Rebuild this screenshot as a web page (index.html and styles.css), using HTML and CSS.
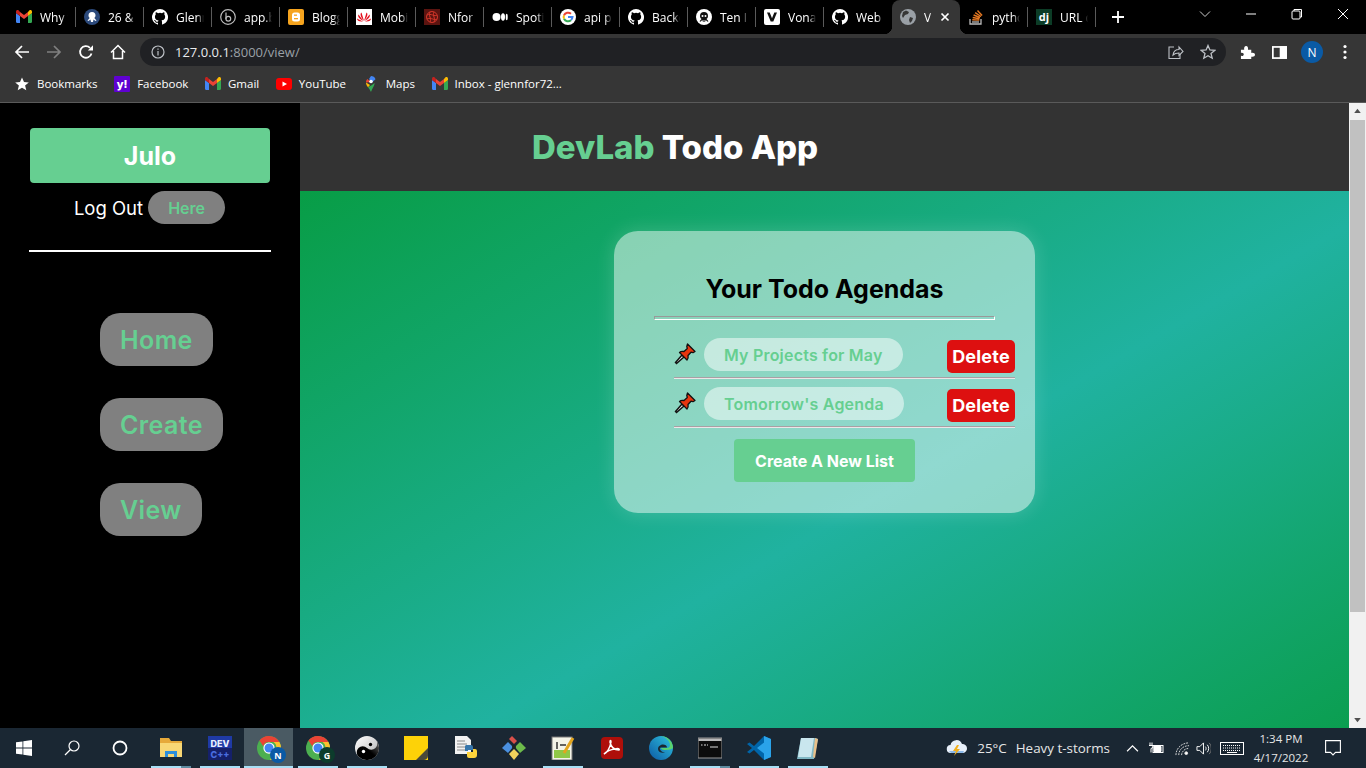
FILE: index.html
```html
<!DOCTYPE html>
<html lang="en">
  <head>
    <meta charset="UTF-8" />
    <meta name="viewport" content="width=device-width, initial-scale=1.0" />
    <title>DevLab Todo App</title>
    <link rel="stylesheet" href="styles.css">
  </head>
  <body>
    <svg class="defs" width="0" height="0">
      <defs>
        <symbol id="gh" viewBox="0 0 16 16"><path fill="#fff" d="M8 0a8 8 0 0 0-2.530 15.590c.4.070.550-.170.550-.380v-1.490c-2.010.370-2.530-.490-2.690-.940-.090-.230-.480-.940-.820-1.130-.280-.150-.680-.520-.010-.530.630-.010 1.080.580 1.230.820.720 1.210 1.870.870 2.330.660.070-.520.280-.870.510-1.070-1.780-.200-3.640-.890-3.640-3.950 0-.870.310-1.590.820-2.150-.080-.200-.360-1.020.080-2.120 0 0 .670-.210 2.200.820a7.400 7.400 0 0 1 4 0c1.530-1.040 2.200-.820 2.200-.820.440 1.100.160 1.920.080 2.120.510.560.820 1.270.820 2.150 0 3.070-1.870 3.750-3.650 3.950.290.250.540.730.540 1.480v2.200c0 .210.150.460.550.380A8 8 0 0 0 8 0z"/></symbol>
        <symbol id="gmail" viewBox="0 0 16 16"><path fill="#4285f4" d="M1 14h3V7L0 4v8.800C0 13.500.5 14 1 14z"/><path fill="#34a853" d="M12 14h3c.6 0 1-.5 1-1.200V4l-4 3z"/><path fill="#fbbc04" d="M12 3v4l4-3V2.500c0-1.300-1.500-2-2.500-1.200z"/><path fill="#ea4335" d="M4 7V3l4 3 4-3v4L8 10z"/><path fill="#c5221f" d="M0 2.500V4l4 3V3L2.500 1.300C1.500.5 0 1.200 0 2.500z"/></symbol>
        <symbol id="octo" viewBox="0 0 16 16"><circle cx="8" cy="8" r="8" fill="#fff"/><path fill="#111" d="M8 3a4 4 0 0 0-4 4c0 1.600.8 2.500 1.500 3L3.500 12.300l1 .5L6.300 11l.7 2h.6V11h.8v2h.6l.7-2 1.800 1.800 1-.5L10.500 10c.7-.5 1.500-1.400 1.500-3a4 4 0 0 0-4-4z"/><circle cx="6.500" cy="7" r="1" fill="#fff"/><circle cx="9.500" cy="7" r="1" fill="#fff"/></symbol>
        <symbol id="chrome" viewBox="0 0 32 32"><circle cx="16" cy="16" r="16" fill="#4caf50"/><path fill="#ea4335" d="M16 0a16 16 0 0 1 13.900 8H16a8 8 0 0 0-7.700 5.700L3.300 5.900A16 16 0 0 1 16 0z"/><path fill="#fbc02d" d="M29.900 8a16 16 0 0 1-12.700 23.900L23 21a8 8 0 0 0-1-13z"/><circle cx="16" cy="16" r="7.500" fill="#fff"/><circle cx="16" cy="16" r="6" fill="#4285f4"/></symbol>
        <symbol id="pin" viewBox="0 0 22 22">
          <path fill="#dfe3e6" stroke="#111" stroke-width="1.400" d="M8 12 1.500 19.500l1 1L10 14z"/>
          <path fill="#e8350f" stroke="#111" stroke-width="1.300" stroke-linejoin="round" d="M13.500 1 21 8.500l-2 1.200-2-.5-3 3.300c.5 2 0 3.500-1 4.500L5.500 9.500c1-1 2.500-1.500 4.500-1l3.300-3-.5-2z"/>
        </symbol>
      </defs>
    </svg>

    <div class="tabstrip">
      <div class="tab first"><svg class="fav"><use href="#gmail"/></svg><span class="tab-title">Why we</span></div>
      <div class="tab"><svg class="fav" viewBox="0 0 16 16"><circle cx="8" cy="8" r="8" fill="#2c4a7c"/><path fill="#fff" d="M8 3a3.500 3.500 0 0 0-3.500 3.500c0 1.300.6 2 1.200 2.500L3.500 11.500l1 .4L6.500 10.500 7 13h2l.5-2.500 2 1.400 1-.4L10.300 9c.6-.5 1.200-1.200 1.200-2.500A3.500 3.500 0 0 0 8 3z"/></svg><span class="tab-title">26 &amp; more</span></div>
      <div class="tab"><svg class="fav"><use href="#gh"/></svg><span class="tab-title">Glennfor</span></div>
      <div class="tab"><svg class="fav" viewBox="0 0 16 16" fill="none" stroke="#bdbdbd" stroke-width="1.200"><circle cx="8" cy="8" r="7.300"/><path d="M6 3.500v6.500"/><circle cx="8.300" cy="9.800" r="2.400"/></svg><span class="tab-title">app.bit</span></div>
      <div class="tab"><svg class="fav" viewBox="0 0 16 16"><rect width="16" height="16" rx="2" fill="#f6a41e"/><rect x="4" y="3.500" width="8" height="9" rx="2.500" fill="#fff"/><rect x="6" y="5.500" width="3" height="1.300" fill="#f6a41e"/><rect x="6" y="9" width="4" height="1.300" fill="#f6a41e"/></svg><span class="tab-title">Blogger</span></div>
      <div class="tab"><svg class="fav" viewBox="0 0 16 16"><rect width="16" height="16" fill="#fff"/><path fill="#e3101e" d="M8 12 5.500 3.500C4 4.500 4 7 8 12zm0 0 2.500-8.500C12 4.500 12 7 8 12zM7.500 12 2.500 5.500C1.500 7 2.500 9.500 7.500 12zm1 0 5-6.500c1 1.500 0 4-5 6.500zM7 12.500 1 9.500c0 2 2 3.500 6 3zm2 0 6-3c0 2-2 3.500-6 3z"/></svg><span class="tab-title">Mobile</span></div>
      <div class="tab"><svg class="fav" viewBox="0 0 16 16" fill="none" stroke="#d4362a"><rect width="16" height="16" fill="#5c1410" stroke="none"/><circle cx="8" cy="8" r="5.500"/><path d="M3 6c4-2 8 2 10 0M3 10c4-2 8 2 10 0M6 3c-2 4 2 6 0 10M10 3c-2 4 2 6 0 10"/></svg><span class="tab-title">Nfor</span></div>
      <div class="tab"><svg class="fav" viewBox="0 0 16 16" fill="#fff"><circle cx="4.500" cy="8" r="4"/><ellipse cx="11" cy="8" rx="2" ry="3.700"/><ellipse cx="14.700" cy="8" rx="1" ry="3.300"/></svg><span class="tab-title">Spotify</span></div>
      <div class="tab"><svg class="fav" viewBox="0 0 16 16"><circle cx="8" cy="8" r="8" fill="#fff"/><path fill="none" stroke="#4285f4" stroke-width="2" d="M8 8h4.500a4.600 4.600 0 0 1-1.500 3"/><path fill="none" stroke="#34a853" stroke-width="2" d="M11 11.300a4.600 4.600 0 0 1-7-1.600"/><path fill="none" stroke="#fbbc04" stroke-width="2" d="M4 9.700a4.600 4.600 0 0 1 0-3.400"/><path fill="none" stroke="#ea4335" stroke-width="2" d="M4 6.300a4.600 4.600 0 0 1 7-1.600"/></svg><span class="tab-title">api pr</span></div>
      <div class="tab"><svg class="fav"><use href="#gh"/></svg><span class="tab-title">Backend</span></div>
      <div class="tab"><svg class="fav"><use href="#octo"/></svg><span class="tab-title">Ten Ir</span></div>
      <div class="tab"><svg class="fav" viewBox="0 0 16 16"><rect width="16" height="16" rx="2" fill="#fff"/><path fill="#111" d="M3 3.500h2.700L8 9.200l2.300-5.700H13L9.300 12.500H6.700z"/></svg><span class="tab-title">Vonage</span></div>
      <div class="tab no-sep"><svg class="fav"><use href="#gh"/></svg><span class="tab-title">Web</span></div>
      <div class="tab active"><svg class="fav" viewBox="0 0 16 16"><circle cx="8" cy="8" r="8" fill="#9aa0a6"/><path fill="#363636" d="M6 1.500 9 3 8 5 5 6l-2 3-1-2 1-4zM10 8l3 1-1 3-2 2-1-3z"/></svg><span class="tab-title">View</span><svg class="tab-close" viewBox="0 0 10 10" stroke="#fff" stroke-width="1.700"><path d="M1.500 1.500l7 7M8.500 1.500l-7 7"/></svg></div>
      <div class="tab"><svg class="fav" viewBox="0 0 16 16" fill="none"><path stroke="#bcbbbb" stroke-width="1.300" d="M2 10v5h11v-5"/><path stroke="#bcbbbb" stroke-width="1.300" d="M4 13h7"/><path stroke="#e87922" stroke-width="1.400" d="M4.300 10.800l7 .3M4.700 8.500l6.800 1.200M5.600 6l6.400 2.500M7.200 3.700l5.800 3.800M9.500 1.500l4.600 5"/></svg><span class="tab-title">python</span></div>
      <div class="tab"><svg class="fav" viewBox="0 0 16 16"><rect width="16" height="16" fill="#0c3c26"/><text class="dj" x="8" y="12" text-anchor="middle">dj</text></svg><span class="tab-title">URL dispatcher</span></div>
      <svg class="new-tab" viewBox="0 0 12 12" stroke="#fff" stroke-width="1.800"><path d="M6 0v12M0 6h12"/></svg>
      <div class="window-controls">
        <svg class="win-icon" viewBox="0 0 12 12" fill="none" stroke="#ccc"><path d="M1 3.500 6 8.500l5-5"/></svg>
        <svg class="win-icon" viewBox="0 0 12 12" stroke="#fff"><path d="M1 6h10"/></svg>
        <svg class="win-icon" viewBox="0 0 12 12" fill="none" stroke="#fff"><rect x="1" y="3" width="8" height="8" rx="1"/><path d="M3 3V1.500h7.500V9H9"/></svg>
        <svg class="win-icon" viewBox="0 0 12 12" stroke="#fff"><path d="M1 1l10 10M11 1 1 11"/></svg>
      </div>
    </div>

    <div class="toolbar">
      <svg class="tool" viewBox="0 0 16 16" fill="none" stroke="#fff" stroke-width="1.700"><path d="M15 8H2M8 2 2 8l6 6"/></svg>
      <svg class="tool" viewBox="0 0 16 16" fill="none" stroke="#808080" stroke-width="1.700"><path d="M1 8h13M8 2l6 6-6 6"/></svg>
      <svg class="tool" viewBox="0 0 16 16" fill="none" stroke="#fff" stroke-width="1.800"><path d="M13.500 9.500A5.800 5.800 0 1 1 12 3.800"/><path fill="#fff" stroke="none" d="M9.800 6.500H15V1.300z"/></svg>
      <svg class="tool" viewBox="0 0 16 16" fill="none" stroke="#fff" stroke-width="1.500"><path d="M1 8.500 8 1.500l7 7M3.500 7v7.500h9V7"/></svg>
      <div class="omnibox">
        <svg class="info" viewBox="0 0 14 14" fill="none" stroke="#bdc1c6" stroke-width="1.200"><circle cx="7" cy="7" r="6"/><path d="M7 6v4.500M7 3.500v1.200"/></svg>
        <span class="url">127.0.0.1<span class="url-dim">:8000/view/</span></span>
        <span class="spacer"></span>
        <svg class="omni-icon" viewBox="0 0 16 16" fill="none" stroke="#bdc1c6" stroke-width="1.100"><path d="M6 3H1v11.500h11V10"/><path d="M5 11c.5-3.500 3-5.500 6-5.500V3l4 4.500-4 4V9c-2.500 0-4.500.5-6 2z"/></svg>
        <svg class="omni-icon" viewBox="0 0 16 16" fill="none" stroke="#bdc1c6" stroke-width="1.300"><path d="M8 1.500 9.900 6l4.800.4-3.700 3.100 1.200 4.700L8 11.700l-4.200 2.500L5 9.500 1.300 6.400 6.100 6z"/></svg>
      </div>
      <svg class="ext-icon" viewBox="0 0 16 16" fill="#fff"><path d="M1 5h3.500C4 2.500 5 1 6.500 1S9 2.500 8.500 5H12v3.500c2.500-.5 4 .5 4 2s-1.500 2.500-4 2V15H1v-3.500c2 .5 3-.5 3-1.500S3 8 1 8.500z"/></svg>
      <svg class="ext-icon" viewBox="0 0 14 12" fill="none" stroke="#fff" stroke-width="1.600"><rect x=".8" y=".8" width="12.400" height="10.400"/><path fill="#fff" d="M8 1h5v10H8z"/></svg>
      <span class="avatar">N</span>
      <svg class="menu-dots" viewBox="0 0 4 16" fill="#fff"><circle cx="2" cy="2.500" r="1.600"/><circle cx="2" cy="8" r="1.600"/><circle cx="2" cy="13.500" r="1.600"/></svg>
    </div>

    <div class="bookmarks">
      <div class="bm"><svg class="fav" viewBox="0 0 16 16" fill="#fff"><path d="M8 1.500 10 6l4.800.4-3.700 3.100 1.200 4.700L8 11.700l-4.300 2.500 1.200-4.700L1.200 6.400 6 6z"/></svg>Bookmarks</div>
      <div class="bm"><svg class="fav" viewBox="0 0 16 16"><rect width="16" height="16" rx="1" fill="#5f01d1"/><text class="yahoo" x="8" y="12" text-anchor="middle">y!</text></svg>Facebook</div>
      <div class="bm"><svg class="fav"><use href="#gmail"/></svg>Gmail</div>
      <div class="bm"><svg class="fav" viewBox="0 0 16 16"><rect y="2" width="16" height="12" rx="3" fill="#f00"/><path fill="#fff" d="M6.500 5.500 11 8l-4.500 2.500z"/></svg>YouTube</div>
      <div class="bm"><svg class="fav" viewBox="0 0 16 16"><path fill="#34a853" d="M8 16c-1-2-2-3.500-3-4.700L9 9l2.500-2c.3 2-1.500 4-3.500 9z"/><path fill="#fbbc04" d="M5 11.300C4 10 3 8.700 3 6.500L7 9z"/><path fill="#4285f4" d="M8 0c2 0 3.800 1.200 4.500 3.200L9 6.500 6 3z"/><path fill="#ea4335" d="M3 6.500C3 5 3.500 4 4.300 3L8 6z"/><circle cx="8" cy="5.500" r="1.800" fill="#fff"/></svg>Maps</div>
      <div class="bm"><svg class="fav"><use href="#gmail"/></svg>Inbox - glennfor72...</div>
    </div>

    <div class="viewport">
      <aside class="sidebar">
        <div class="user-btn">Julo</div>
        <div class="logout">Log Out <span class="here">Here</span></div>
        <hr class="side-rule" />
        <nav class="side-nav">
          <a class="nav-pill">Home</a>
          <a class="nav-pill">Create</a>
          <a class="nav-pill">View</a>
        </nav>
      </aside>

      <main class="content">
        <header class="app-header">
          <h1><span class="accent">DevLab</span> Todo App</h1>
        </header>
        <section class="stage">
          <div class="card">
            <h2>Your Todo Agendas</h2>
            <hr class="card-rule" />
            <div class="todo-row">
              <svg class="pin"><use href="#pin"/></svg>
              <span class="todo-name">My Projects for May</span>
              <button class="delete-btn">Delete</button>
            </div>
            <div class="todo-row">
              <svg class="pin"><use href="#pin"/></svg>
              <span class="todo-name">Tomorrow's Agenda</span>
              <button class="delete-btn">Delete</button>
            </div>
            <button class="create-btn">Create A New List</button>
          </div>
        </section>
      </main>

      <div class="scrollbar">
        <svg class="arrow" viewBox="0 0 17 17" fill="#505050"><path d="M8.500 6 12 10.500H5z"/></svg>
        <div class="thumb"></div>
        <svg class="arrow" viewBox="0 0 17 17" fill="#505050"><path d="M8.500 11 5 6.500h7z"/></svg>
      </div>
    </div>

    <footer class="taskbar">
      <div class="task start"><svg class="task-icon" viewBox="0 0 16 16" fill="#fff"><path d="M0 2.300 6.500 1.400v6.200H0zM7.300 1.300 16 0v7.600H7.300zM0 8.400h6.500v6.200L0 13.700zM7.300 8.400H16V16l-8.700-1.300z"/></svg></div>
      <div class="task start"><svg class="task-icon" viewBox="0 0 16 16" fill="none" stroke="#fff" stroke-width="1.200"><circle cx="10" cy="6" r="5"/><path d="M6.500 9.500 1 15"/></svg></div>
      <div class="task start"><svg class="task-icon" viewBox="0 0 16 16" fill="none" stroke="#fff" stroke-width="1.800"><circle cx="8" cy="8" r="6.500"/></svg></div>

      <div class="task on split"><svg class="app-icon" viewBox="0 0 24 24"><path fill="#e6a93a" d="M1 2h9l2 3h11v3H1z"/><path fill="#f8d775" d="M1 7h22v14H1z"/><path fill="#2d8fdc" d="M6 21v-6h12v6h-3v-3H9v3z"/></svg></div>
      <div class="task on"><svg class="app-icon" viewBox="0 0 24 24"><rect width="24" height="24" fill="#1f3aa5"/><rect y="12" width="24" height="12" fill="#15206a"/><text class="dev" x="12" y="11" text-anchor="middle">DEV</text><text class="dev dim" x="12" y="22" text-anchor="middle">C++</text></svg></div>
      <div class="task on active-app"><svg class="app-icon" viewBox="0 0 32 32"><use href="#chrome"/></svg><span class="badge blue">N</span></div>
      <div class="task on"><svg class="app-icon" viewBox="0 0 32 32"><use href="#chrome"/></svg><span class="badge dark">G</span></div>
      <div class="task on"><svg class="app-icon" viewBox="0 0 24 24"><defs><linearGradient id="yy" x1="0" y1="0" x2="1" y2="1"><stop offset="0" stop-color="#fff"/><stop offset=".6" stop-color="#d0d0d0"/><stop offset="1" stop-color="#7a7a7a"/></linearGradient><linearGradient id="yk" x1="0" y1="1" x2="1" y2="0"><stop offset=".5" stop-color="#000"/><stop offset="1" stop-color="#777"/></linearGradient></defs><circle cx="12" cy="12" r="12" fill="url(#yy)"/><path fill="url(#yk)" d="M20.500 3.500A12 12 0 0 1 3.500 20.500 6 6 0 0 1 12 12a6 6 0 0 0 8.500-8.500z"/><circle cx="15.500" cy="8.500" r="1.700" fill="#000"/><circle cx="8.500" cy="15.500" r="1.700" fill="#fff"/></svg></div>
      <div class="task"><svg class="app-icon" viewBox="0 0 22 22"><rect width="22" height="22" fill="#fdd208"/><path fill="#4a4a3a" d="M11 22 22 11v7a4 4 0 0 1-4 4z"/></svg></div>
      <div class="task"><svg class="app-icon" viewBox="0 0 24 24"><path fill="#f2f2f2" d="M2 0h12l4 4v14H2z"/><path stroke="#888" d="M4 5h8M4 8h10M4 11h10M4 14h8"/><path fill="#3776ab" d="M13 9h5a2 2 0 0 1 2 2v3h-5v1h-3v-4a2 2 0 0 1 1-2z"/><path fill="#ffd43b" d="M20 13h2a2 2 0 0 1 2 2v4a3 3 0 0 1-3 3h-5a2 2 0 0 1-2-2v-4h6z"/></svg></div>
      <div class="task"><svg class="app-icon" viewBox="0 0 24 24"><path fill="#d9504a" d="M7 3l3-3 5 5-3 3z"/><path fill="#4a90e0" d="M0 12l6-6 5 5-5 6z"/><path fill="#6dbb4b" d="M13 11l5-5 6 6-6 5z"/><path fill="#f2d25c" d="M7 18l5-5 5 5-5 6z"/><circle cx="12" cy="11" r="2" fill="#222"/></svg></div>
      <div class="task on"><svg class="app-icon" viewBox="0 0 24 24"><rect x="1" y="1" width="20" height="23" fill="#f4f4e8" stroke="#777"/><rect x="3" y="14" width="16" height="8" fill="#90c847"/><path stroke="#333" stroke-width="1.500" d="M6 6v7M9 9h6"/><path stroke="#e3a51e" stroke-width="3" d="M13 17 22 2"/></svg></div>
      <div class="task"><svg class="app-icon" viewBox="0 0 24 24"><rect width="22" height="22" x="1" y="1" rx="4" fill="#ae0f0a"/><path fill="none" stroke="#fff" stroke-width="1.500" d="M4 18c3-1 6-6 7-12 0-2-1-2-1 0 1 5 4 8 9 8 1-1-1-2-4-1-4 .5-8 2-11 5z"/></svg></div>
      <div class="task"><svg class="app-icon" viewBox="0 0 24 24"><defs><linearGradient id="ed" x1="0" y1="1" x2="1" y2="0"><stop offset="0" stop-color="#0c59a4"/><stop offset="1" stop-color="#2fc4e0"/></linearGradient></defs><circle cx="12" cy="12" r="12" fill="url(#ed)"/><path fill="#5ad46e" d="M24 12c0-7-6-12-12-12C17 1 21 5 21 9c0 2-1 3-3 3h-6c0 1 2 2 4 2 4 0 7-1 8-2z"/><path fill="#1b2631" d="M9 13c0-3 3-4.500 5-4.500s4 1 4 3H12c-1 0-1.500 1-1 2 1 2 3 3 5 3-4 1-7-1-7-3.500z"/></svg></div>
      <div class="task on split"><svg class="app-icon" viewBox="0 0 24 24"><rect y="2" width="24" height="20" fill="#0c0c0c" stroke="#9a9a9a"/><rect x=".5" y="2.500" width="23" height="2.500" fill="#bbb"/><path stroke="#ddd" d="M3 9h1.500M6 9h2M9 9h1M12 11h8"/></svg></div>
      <div class="task on"><svg class="app-icon" viewBox="0 0 24 24"><path fill="#0065a9" d="M17 0 7 10 2.500 6.500 0 8l5 4-5 4 2.500 1.500L7 14l10 10 7-3V3z"/><path fill="#2aa3ea" d="M17 0l7 3v18l-7 3zM17 6.500 10 12l7 5.500z"/></svg></div>
      <div class="task on"><svg class="app-icon" viewBox="0 0 24 24"><path fill="#7fb7c4" d="M5 2h14l3 1-4 20H1z"/><path fill="#c9e6ee" d="M5 2h13L15 21H2z"/><path fill="#e8c08a" d="M19 2l3 1-3 19-2-1z"/></svg></div>

      <div class="tray">
        <svg class="weather" viewBox="0 0 22 18"><path fill="#e8f0fa" d="M5 14a4 4 0 0 1-.5-8A6 6 0 0 1 16 5a4.500 4.500 0 0 1 1 9z"/><path fill="#8bb8e8" d="M3 12h15l-1 2H5z"/><path fill="#f2b01e" d="M11 6 7 12h3l-2 5 6-7h-3l2-4z"/></svg>
        <span class="tray-text temp">25°C</span>
        <span class="tray-text">Heavy t-storms</span>
        <svg class="tray-icon caret" viewBox="0 0 12 12" fill="none" stroke="#fff" stroke-width="1.100"><path d="M1 8.500 6 3.500l5 5"/></svg>
        <svg class="tray-icon battery" viewBox="0 0 16 12" fill="none" stroke="#fff"><rect x="5" y="3" width="10" height="7"/><path fill="#fff" d="M6 4h7v5H6z"/><path d="M2 0v3M4 0v3M1 3h4v2l-2 1v4"/></svg>
        <svg class="tray-icon wifi" viewBox="0 0 16 16" fill="none" stroke="#ddd"><path d="M1 15c0-7 6-13 14-13M4 15c0-5 4-10 11-10" stroke-dasharray="2 1"/><path d="M7 15c0-3 3-7 7-7" stroke-dasharray="2 1"/><circle cx="12" cy="13" r="1.500" fill="#fff"/></svg>
        <svg class="tray-icon volume" viewBox="0 0 16 16" fill="none" stroke="#fff"><path d="M1 6h3l4-4v12l-4-4H1z"/><path d="M10 6c1 1 1 3 0 4M12 4c2 2 2 6 0 8"/><path stroke="#777" d="M14 2c3 3 3 9 0 12"/></svg>
        <svg class="keyboard" viewBox="0 0 24 13" fill="none" stroke="#fff"><rect x=".5" y=".5" width="23" height="12"/><path stroke-dasharray="1 1" d="M3 3.500h18M3 6h18M3 8.500h18"/><path d="M7 10.500h10"/></svg>
        <div class="clock"><span>1:34 PM</span><span>4/17/2022</span></div>
        <svg class="notif" viewBox="0 0 16 16" fill="none" stroke="#fff" stroke-width="1.100"><path d="M.6.600h14.800v11.800H10.500L8 15l-2.500-2.600H.6z"/></svg>
      </div>
    </footer>
  </body>
</html>
```

FILE: styles.css
```css
* {
  box-sizing: border-box;
}
html,
body {
  margin: 0;
  padding: 0;
  height: 768px;
  overflow: hidden;
}
body {
  display: flex;
  flex-direction: column;
  width: 1366px;
  font-family: "Open Sans", Arial, sans-serif;
  background-color: #000;
}
.defs {
  display: none;
}
.fav {
  width: 16px;
  height: 16px;
  flex: none;
}

/* browser chrome */
.tabstrip {
  display: flex;
  align-items: center;
  height: 34px;
  flex: none;
  background-color: #000;
  color: #fff;
  font-size: 12px;
}
.tab {
  display: flex;
  align-items: center;
  gap: 8px;
  width: 68px;
  height: 34px;
  flex: none;
  padding-left: 8px;
  padding-right: 8px;
  background: linear-gradient(#5a5a5a, #5a5a5a) right 7px / 1px 20px no-repeat;
}
.tab.first {
  margin-left: 8px;
}
.tab.no-sep {
  background: none;
}
.tab-title {
  overflow: hidden;
  white-space: nowrap;
  flex: 1;
  min-width: 0;
  -webkit-mask-image: linear-gradient(to right, #000 75%, transparent);
  mask-image: linear-gradient(to right, #000 75%, transparent);
}
.tab.active {
  position: relative;
  padding-right: 10px;
  background: #363636;
  border-radius: 8px 8px 0 0;
}
/* little flares where the active tab meets the toolbar */
.tab.active::before,
.tab.active::after {
  content: "";
  position: absolute;
  bottom: 0;
  width: 8px;
  height: 8px;
}
.tab.active::before {
  left: -8px;
  background: radial-gradient(circle at 0 0, #000 8px, #363636 8.5px);
}
.tab.active::after {
  right: -8px;
  background: radial-gradient(circle at 100% 0, #000 8px, #363636 8.5px);
}
.tab-close {
  width: 10px;
  height: 10px;
  flex: none;
}
.new-tab {
  width: 12px;
  height: 12px;
  margin-left: 16px;
}
.window-controls {
  display: flex;
  align-items: center;
  margin-left: auto;
  height: 28px;
  align-self: flex-start;
}
.win-icon {
  width: 12px;
  height: 12px;
  margin-left: 34px;
}
.window-controls .win-icon:first-child {
  margin-left: 0;
}
.window-controls .win-icon:last-child {
  margin-right: 17px;
}

.toolbar {
  display: flex;
  align-items: center;
  height: 34px;
  flex: none;
  padding: 2px 0 0 14px;
  background-color: #363636;
}
.tool {
  width: 16px;
  height: 16px;
  flex: none;
  margin-right: 16px;
}
.omnibox {
  display: flex;
  align-items: center;
  width: 1086px;
  height: 28px;
  margin-left: -2px;
  padding: 0 10px;
  border-radius: 14px;
  background-color: #202124;
}
.info {
  width: 14px;
  height: 14px;
  margin-left: 1px;
  margin-right: 10px;
}
.url {
  font-size: 13px;
  color: #e8eaed;
}
.url-dim {
  color: #9aa0a6;
}
.spacer {
  flex: 1;
}
.omni-icon {
  width: 16px;
  height: 16px;
  margin-left: 16px;
}
.omni-icon:last-child {
  margin-right: 0;
}
.ext-icon {
  width: 15px;
  height: 15px;
  margin-left: 14px;
  margin-right: 3px;
}
.avatar {
  display: flex;
  align-items: center;
  justify-content: center;
  width: 22px;
  height: 22px;
  margin-left: 11px;
  border-radius: 50%;
  background-color: #0a5aa5;
  color: #fff;
  font-size: 12px;
}
.menu-dots {
  width: 4px;
  height: 16px;
  margin-left: 20px;
}

.bookmarks {
  display: flex;
  align-items: center;
  gap: 16.6px;
  height: 34px;
  flex: none;
  padding: 0 0 3px 14px;
  background-color: #363636;
  color: #fff;
  font-size: 11.5px;
}
.bm {
  display: flex;
  align-items: center;
  gap: 7px;
}

/* page */
.viewport {
  display: flex;
  flex: 1;
  min-height: 0;
  border-top: 1px solid #5a5a5a;
  font-family: Inter, Arial, sans-serif;
}
.sidebar {
  display: flex;
  flex-direction: column;
  width: 300px;
  flex: none;
  padding: 25px 29px 0 30px;
  background-color: #000;
}
.user-btn {
  display: flex;
  align-items: center;
  justify-content: center;
  width: 240px;
  height: 55px;
  border-radius: 4px;
  background-color: #66cf91;
  color: #fff;
  font-size: 25px;
  font-weight: 700;
}
.logout {
  display: flex;
  align-items: center;
  justify-content: center;
  gap: 5px;
  height: 33px;
  margin: 8px 0 0 -2px;
  color: #fff;
  font-size: 18.5px;
}
.here {
  display: flex;
  align-items: center;
  justify-content: center;
  width: 77px;
  height: 33px;
  border-radius: 17px;
  background-color: #808080;
  color: #66cf91;
  font-size: 16px;
  font-weight: 600;
}
.side-rule {
  width: 242px;
  height: 2px;
  margin: 26px 0 0 -1px;
  border: none;
  background-color: #fff;
}
.side-nav {
  display: flex;
  flex-direction: column;
  align-items: flex-start;
  gap: 32px;
  margin-top: 61px;
  margin-left: 70px;
}
.nav-pill {
  display: flex;
  align-items: center;
  height: 53px;
  padding: 0 20px;
  border-radius: 20px;
  background-color: #808080;
  color: #66cf91;
  font-size: 25px;
  font-weight: 600;
  letter-spacing: 0.4px;
}

.content {
  display: flex;
  flex-direction: column;
  flex: 1;
  min-width: 0;
}
.app-header {
  display: flex;
  align-items: center;
  height: 88px;
  flex: none;
  padding-left: 232px;
  background-color: #333;
}
.app-header h1 {
  margin: 0;
  color: #fff;
  font-size: 33px;
  font-weight: 800;
}
.accent {
  color: #66cf91;
}
.stage {
  flex: 1;
  padding: 40px 0 0 314px;
  background: linear-gradient(150deg, #089d46 0%, #20b2a0 56%, #0b9e50 100%);
}
.card {
  display: flex;
  flex-direction: column;
  align-items: center;
  width: 421px;
  height: 282px;
  padding: 41px 20px 0 60px;
  border-radius: 24px;
  background-color: rgba(255, 255, 255, 0.5);
  box-shadow: 0 0 20px rgba(255, 255, 255, 0.18);
}
.card h2 {
  margin: 0 0 10px -40px;
  color: #000;
  font-size: 25px;
  line-height: 34px;
  font-weight: 700;
}
.card-rule {
  width: 341px;
  height: 4px;
  margin: 0 0 18px -40px;
  border: none;
  border-top: 1px solid #999;
  border-bottom: 1px solid #fff;
  border-left: 1px solid #999;
  border-right: 1px solid #fff;
  flex: none;
}
.todo-row {
  display: flex;
  align-items: flex-start;
  width: 341px;
  height: 41px;
  flex: none;
  margin-bottom: 8px;
  border-bottom: 1px solid #ece6e8;
  box-shadow: inset 0 -1px 0 #a9a0a4;
}
.pin {
  width: 22px;
  height: 22px;
  margin: 5px 8px 0 0;
  flex: none;
}
.todo-name {
  display: flex;
  align-items: center;
  height: 33px;
  padding: 0 20px;
  border-radius: 17px;
  background-color: rgba(255, 255, 255, 0.5);
  color: #66cf91;
  font-size: 16px;
  font-weight: 600;
  letter-spacing: 0.2px;
  white-space: nowrap;
}
.delete-btn {
  width: 68px;
  height: 33px;
  margin: 2px 0 0 auto;
  padding: 0;
  border: none;
  border-radius: 5px;
  background-color: #dd1010;
  color: #fff;
  font-family: Inter, Arial, sans-serif;
  font-size: 18px;
  font-weight: 700;
  letter-spacing: 0.2px;
}
.create-btn {
  width: 181px;
  height: 43px;
  margin: 3px 0 0 -40px;
  flex: none;
  border: none;
  border-radius: 4px;
  background-color: #66cf91;
  color: #fff;
  font-family: Inter, Arial, sans-serif;
  font-size: 16px;
  font-weight: 700;
}
.scrollbar {
  display: flex;
  flex-direction: column;
  width: 17px;
  flex: none;
  background-color: #f1f1f1;
}
.arrow {
  width: 17px;
  height: 16px;
  flex: none;
}
.thumb {
  width: 15px;
  height: 492px;
  margin: 1px 1px auto;
  background-color: #c1c1c1;
}

/* windows taskbar */
.taskbar {
  display: flex;
  height: 40px;
  flex: none;
  background-color: #1a2733;
  color: #fff;
}
.task {
  display: flex;
  align-items: center;
  justify-content: center;
  position: relative;
  width: 49px;
  height: 40px;
  flex: none;
}
.task.start {
  width: 48px;
}
.task.start + .task:not(.start) {
  margin-left: 2px;
}
.task.on::after {
  content: "";
  position: absolute;
  left: 5px;
  right: 4px;
  bottom: 0;
  height: 2px;
  background-color: #a8dff5;
}
.task.split::after {
  background: linear-gradient(to right, #a8dff5 76%, #5e8ba0 76%);
}
.active-app {
  background-color: #4a5a63;
}
.active-app.on::after {
  left: 0;
  right: 0;
}
.task-icon {
  width: 16px;
  height: 16px;
}
.app-icon {
  width: 24px;
  height: 24px;
}
.badge {
  display: flex;
  align-items: center;
  justify-content: center;
  position: absolute;
  left: 26px;
  top: 19px;
  width: 16px;
  height: 16px;
  border-radius: 50%;
  font-size: 9px;
  font-weight: 700;
  color: #fff;
}
.badge.blue {
  background-color: #0a5aa5;
}
.badge.dark {
  background-color: #0c3c2c;
}
.tray {
  display: flex;
  align-items: center;
  margin-left: auto;
  font-family: "Open Sans", Arial, sans-serif;
  font-size: 13.4px;
  color: #e6e6e6;
}
.weather {
  width: 22px;
  height: 18px;
  margin-right: 9px;
}
.tray-text {
  white-space: nowrap;
}
.temp {
  margin-right: 9px;
}
.tray-icon {
  width: 15px;
  height: 15px;
  flex: none;
}
.caret {
  width: 13px;
  height: 13px;
  margin-left: 16px;
}
.battery {
  width: 16px;
  margin-left: 9px;
}
.wifi {
  margin-left: 11px;
}
.volume {
  margin-left: 6px;
}
.keyboard {
  width: 24px;
  height: 13px;
  margin-left: 9px;
}
.clock {
  display: flex;
  flex-direction: column;
  align-items: center;
  width: 60px;
  margin-left: 7px;
  font-size: 11.5px;
  line-height: 19px;
}
.notif {
  width: 16px;
  height: 16px;
  margin-left: 14px;
  margin-right: 25px;
}
text.dj {
  font: 700 11px "Open Sans", sans-serif;
  fill: #fff;
}
text.yahoo {
  font: 800 11px Inter, sans-serif;
  fill: #fff;
}
text.dev {
  font: 800 9px Inter, sans-serif;
  fill: #e8f0ff;
}
text.dev.dim {
  fill: #4a6ee0;
}
```
